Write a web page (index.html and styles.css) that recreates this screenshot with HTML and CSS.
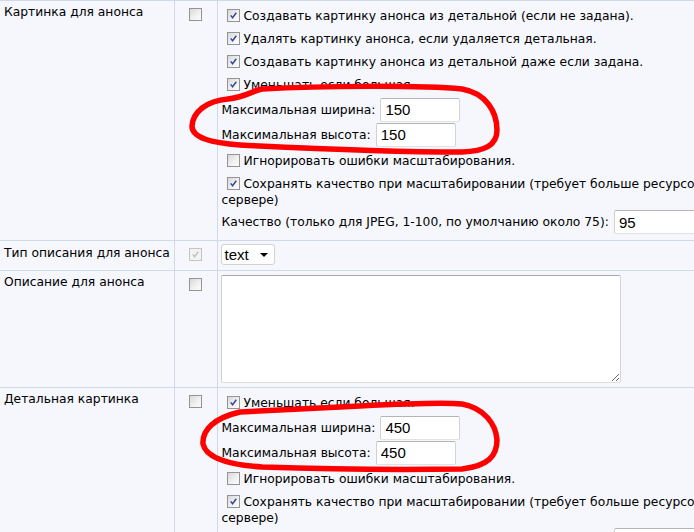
FILE: index.html
```html
<!DOCTYPE html>
<html>
<head>
  <title>Параметры картинок</title>
  <link rel="stylesheet" href="styles.css">
</head>
<body>
  <div class="page">
    <table class="edit-table">
      <colgroup>
        <col class="col-label">
        <col class="col-flag">
        <col class="col-field">
      </colgroup>

      <!-- Картинка для анонса -->
      <tr>
        <td class="label">Картинка для анонса</td>
        <td class="flag"><span class="cb"></span></td>
        <td class="field">
          <div class="opt"><span class="cb on"><svg viewBox="0 0 13 13"><path d="M3.2 6.4 L5.4 9.2 L9.8 3.2"/></svg></span>Создавать картинку анонса из детальной (если не задана).</div>
          <div class="opt"><span class="cb on"><svg viewBox="0 0 13 13"><path d="M3.2 6.4 L5.4 9.2 L9.8 3.2"/></svg></span>Удалять картинку анонса, если удаляется детальная.</div>
          <div class="opt"><span class="cb on"><svg viewBox="0 0 13 13"><path d="M3.2 6.4 L5.4 9.2 L9.8 3.2"/></svg></span>Создавать картинку анонса из детальной даже если задана.</div>
          <div class="opt"><span class="cb on"><svg viewBox="0 0 13 13"><path d="M3.2 6.4 L5.4 9.2 L9.8 3.2"/></svg></span>Уменьшать если большая.</div>
          <div class="sizes">
            <div class="size-row">Максимальная ширина:<input class="num" type="text" value="150"></div>
            <div class="size-row">Максимальная высота:<input class="num" type="text" value="150"></div>
          </div>
          <div class="opt"><span class="cb"></span>Игнорировать ошибки масштабирования.</div>
          <div class="opt wrap"><span class="cb on"><svg viewBox="0 0 13 13"><path d="M3.2 6.4 L5.4 9.2 L9.8 3.2"/></svg></span>Сохранять качество при масштабировании (требует больше ресурсов на сервере)</div>
          <div class="quality">Качество (только для JPEG, 1-100, по умолчанию около 75):<input class="num wide" type="text" value="95"></div>
        </td>
      </tr>

      <!-- Тип описания для анонса -->
      <tr class="short">
        <td class="label">Тип описания для анонса</td>
        <td class="flag"><span class="cb off"><svg viewBox="0 0 13 13"><path d="M3.2 6.4 L5.4 9.2 L9.8 3.2"/></svg></span></td>
        <td class="field">
          <div class="select">text<span class="arrow"></span></div>
        </td>
      </tr>

      <!-- Описание для анонса -->
      <tr>
        <td class="label">Описание для анонса</td>
        <td class="flag"><span class="cb"></span></td>
        <td class="field area">
          <textarea class="descr"></textarea>
        </td>
      </tr>

      <!-- Детальная картинка -->
      <tr>
        <td class="label">Детальная картинка</td>
        <td class="flag"><span class="cb"></span></td>
        <td class="field">
          <div class="opt"><span class="cb on"><svg viewBox="0 0 13 13"><path d="M3.2 6.4 L5.4 9.2 L9.8 3.2"/></svg></span>Уменьшать если большая.</div>
          <div class="sizes">
            <div class="size-row">Максимальная ширина:<input class="num" type="text" value="450"></div>
            <div class="size-row">Максимальная высота:<input class="num" type="text" value="450"></div>
          </div>
          <div class="opt"><span class="cb"></span>Игнорировать ошибки масштабирования.</div>
          <div class="opt wrap"><span class="cb on"><svg viewBox="0 0 13 13"><path d="M3.2 6.4 L5.4 9.2 L9.8 3.2"/></svg></span>Сохранять качество при масштабировании (требует больше ресурсов на сервере)</div>
          <div class="quality">Качество (только для JPEG, 1-100, по умолчанию около 75):<input class="num wide" type="text" value="95"></div>
        </td>
      </tr>
    </table>

    <!-- red marker circles drawn over the form -->
    <svg class="marks" width="694" height="532" viewBox="0 0 694 532">
      <path d="M262 89 C320 86 420 85 462 89 C486 93 497 112 497 130 C497 146 484 151 462 152 C400 152 300 148 240 145 C212 143 192 138 192 126 C193 112 206 101 228 99 C246 97 252 91 262 89"/>
      <path d="M240 412 C280 410 320 408 360 406 C400 404 440 402 462 404 C484 408 496 424 497 440 C497 456 488 466 462 469 C400 470 320 469 262 467 C230 465 206 458 203 444 C202 430 214 418 240 412"/>
    </svg>
  </div>
</body>
</html>
```

FILE: styles.css
```css
/* admin form: image settings */
html, body {
  margin: 0;
  padding: 0;
  overflow: hidden;
}

body {
  font-family: "DejaVu Sans", Verdana, sans-serif;
  font-size: 12.3px;
  color: #000;
  background-color: #f5f7fc;
}

.page {
  position: relative;
  width: 694px;
  height: 532px;
  overflow: hidden;
}

.edit-table {
  border-collapse: collapse;
  width: 745px;
  background-color: #f5f7fc;
}

.col-label {
  width: 174px;
}

.col-flag {
  width: 43px;
}

.edit-table td {
  border-top: 1px solid #d0d8ea;
  border-bottom: 1px solid #d0d8ea;
  border-right: 1px solid #d0d8ea;
  vertical-align: top;
  line-height: 16px;
}

.edit-table td.label {
  padding: 3px 0 0 4px;
  white-space: nowrap;
}

.edit-table td.flag {
  padding: 7px 0 0 14px;
}

.edit-table td.field {
  padding: 4px 0 5px 4px;
}

.edit-table td.field.area {
  padding: 4px 0 4px 3px;
}

.edit-table tr.short td {
  vertical-align: middle;
  padding-top: 3px;
  padding-bottom: 5px;
}

.edit-table tr.short td.label {
  padding-top: 0;
  padding-bottom: 6px;
}

.edit-table tr.short td.field {
  padding-left: 3px;
}

/* checkboxes */
.cb {
  display: inline-block;
  box-sizing: border-box;
  width: 13px;
  height: 13px;
  border: 1px solid #949494;
  background: linear-gradient(135deg, #d8d8d8, #f2f2f2 60%, #fcfcfc);
  vertical-align: -2px;
}

.cb svg {
  display: block;
  width: 11px;
  height: 11px;
  margin: 0;
}

.cb svg path {
  fill: none;
  stroke: #34479a;
  stroke-width: 1.7;
}

.cb.off {
  border-color: #c4c4c4;
  background: #f3f3f3;
}

.cb.off svg path {
  stroke: #c2c2c2;
}

.flag .cb {
  display: block;
}

.opt {
  padding: 3px 0 4px 0;
}

.opt .cb {
  margin: 0 4px 0 5px;
}

.opt.wrap {
  padding-bottom: 1px;
}

.sizes {
  padding-bottom: 3px;
}

.size-row {
  display: flex;
  align-items: center;
  height: 25px;
}

.num {
  box-sizing: border-box;
  width: 80px;
  height: 24px;
  margin-left: 5px;
  padding: 0 4px;
  border: 1px solid;
  border-color: #b4b4b4 #d4d4d4 #e2e2e2 #d0d0d0;
  border-radius: 2px;
  background: #fff;
  font-family: "Liberation Sans", Arial, sans-serif;
  font-size: 15px;
  color: #000;
  outline: none;
}

.num.wide {
  width: 120px;
}

.quality {
  display: flex;
  align-items: center;
  height: 26px;
}

.select {
  position: relative;
  box-sizing: border-box;
  width: 54px;
  height: 21px;
  padding-left: 3px;
  border: 1px solid #d2d2d2;
  border-radius: 3px;
  background: #fff;
  font-family: "Liberation Sans", Arial, sans-serif;
  font-size: 15px;
  line-height: 19px;
}

.select .arrow {
  position: absolute;
  right: 6px;
  top: 8px;
  border-left: 4px solid transparent;
  border-right: 4px solid transparent;
  border-top: 4px solid #000;
}

.descr {
  display: block;
  box-sizing: border-box;
  width: 400px;
  height: 108px;
  margin: 0;
  border: 1px solid;
  border-color: #a8a8a8 #d4d4d4 #dedede #d0d0d0;
  border-radius: 2px;
  background: #fff;
  resize: both;
}

.marks {
  position: absolute;
  left: 0;
  top: 0;
  pointer-events: none;
}

.marks path {
  fill: none;
  stroke: #f00;
  stroke-width: 5.5;
  stroke-linecap: round;
  stroke-linejoin: round;
}
```
